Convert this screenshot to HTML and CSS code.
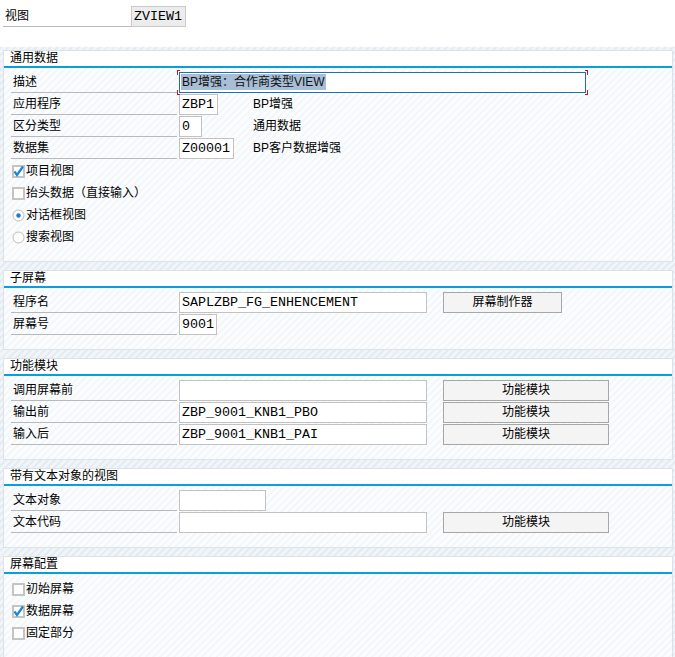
FILE: index.html
```html
<!DOCTYPE html>
<html>

<head>
  <title>视图维护</title>
  <meta charset="utf-8">
  <link rel="stylesheet" href="styles.css">
</head>

<body>

  <div class="top">
    <span class="lbl">视图</span>
    <span class="fld">ZVIEW1</span>
  </div>

  <div class="area">

    <!-- 通用数据 -->
    <div class="grp">
      <div class="grp-head">通用数据</div>
      <div class="grp-body">
        <div class="row">
          <span class="lbl">描述</span>
          <span class="fld fld-sel"><span class="hl">BP增强：合作商类型VIEW</span></span>
        </div>
        <div class="row">
          <span class="lbl">应用程序</span>
          <span class="cell"><span class="fld w39">ZBP1</span></span>
          <span class="txt">BP增强</span>
        </div>
        <div class="row">
          <span class="lbl">区分类型</span>
          <span class="cell"><span class="fld w23">0</span></span>
          <span class="txt">通用数据</span>
        </div>
        <div class="row">
          <span class="lbl">数据集</span>
          <span class="cell"><span class="fld w55">Z00001</span></span>
          <span class="txt">BP客户数据增强</span>
        </div>
        <div class="row opt">
          <svg class="chk" width="13" height="13" viewBox="0 0 13 13"><rect x="1" y="1" width="11" height="11" fill="#fff" stroke="#c4c4c4" stroke-width="2"/><path d="M2.5 6.5 L5 10 L11 1.5" fill="none" stroke="#1e86cf" stroke-width="2.2"/></svg>
          项目视图
        </div>
        <div class="row opt">
          <svg class="chk" width="13" height="13" viewBox="0 0 13 13"><rect x="1" y="1" width="11" height="11" fill="#fff" stroke="#c4c4c4" stroke-width="2"/></svg>
          抬头数据（直接输入）
        </div>
        <div class="row opt">
          <svg class="chk" width="13" height="13" viewBox="0 0 13 13"><circle cx="6.5" cy="6.5" r="5.5" fill="#fff" stroke="#bcbcbc"/><circle cx="6.5" cy="6.5" r="2.2" fill="#1a7cc6"/></svg>
          对话框视图
        </div>
        <div class="row opt">
          <svg class="chk" width="13" height="13" viewBox="0 0 13 13"><circle cx="6.5" cy="6.5" r="5.5" fill="#fff" stroke="#bcbcbc"/></svg>
          搜索视图
        </div>
      </div>
    </div>

    <!-- 子屏幕 -->
    <div class="grp">
      <div class="grp-head">子屏幕</div>
      <div class="grp-body">
        <div class="row">
          <span class="lbl">程序名</span>
          <span class="cell-long"><span class="fld w248">SAPLZBP_FG_ENHENCEMENT</span></span>
          <span class="btn btn-short">屏幕制作器</span>
        </div>
        <div class="row">
          <span class="lbl">屏幕号</span>
          <span class="fld w38">9001</span>
        </div>
      </div>
    </div>

    <!-- 功能模块 -->
    <div class="grp">
      <div class="grp-head">功能模块</div>
      <div class="grp-body">
        <div class="row">
          <span class="lbl">调用屏幕前</span>
          <span class="cell-long"><span class="fld w248"></span></span>
          <span class="btn">功能模块</span>
        </div>
        <div class="row">
          <span class="lbl">输出前</span>
          <span class="cell-long"><span class="fld w248">ZBP_9001_KNB1_PBO</span></span>
          <span class="btn">功能模块</span>
        </div>
        <div class="row">
          <span class="lbl">输入后</span>
          <span class="cell-long"><span class="fld w248">ZBP_9001_KNB1_PAI</span></span>
          <span class="btn">功能模块</span>
        </div>
      </div>
    </div>

    <!-- 带有文本对象的视图 -->
    <div class="grp">
      <div class="grp-head">带有文本对象的视图</div>
      <div class="grp-body">
        <div class="row">
          <span class="lbl">文本对象</span>
          <span class="fld w87"></span>
        </div>
        <div class="row">
          <span class="lbl">文本代码</span>
          <span class="cell-long"><span class="fld w248"></span></span>
          <span class="btn">功能模块</span>
        </div>
      </div>
    </div>

    <!-- 屏幕配置 -->
    <div class="grp grp-last">
      <div class="grp-head">屏幕配置</div>
      <div class="grp-body">
        <div class="row opt">
          <svg class="chk" width="13" height="13" viewBox="0 0 13 13"><rect x="1" y="1" width="11" height="11" fill="#fff" stroke="#c4c4c4" stroke-width="2"/></svg>
          初始屏幕
        </div>
        <div class="row opt">
          <svg class="chk" width="13" height="13" viewBox="0 0 13 13"><rect x="1" y="1" width="11" height="11" fill="#fff" stroke="#c4c4c4" stroke-width="2"/><path d="M2.5 6.5 L5 10 L11 1.5" fill="none" stroke="#1e86cf" stroke-width="2.2"/></svg>
          数据屏幕
        </div>
        <div class="row opt">
          <svg class="chk" width="13" height="13" viewBox="0 0 13 13"><rect x="1" y="1" width="11" height="11" fill="#fff" stroke="#c4c4c4" stroke-width="2"/></svg>
          固定部分
        </div>
      </div>
    </div>

  </div>

</body>

</html>
```

FILE: styles.css
```css
* {
  box-sizing: border-box;
}

body {
  margin: 0;
  background: #fff;
  color: #000;
  font-family: "Liberation Sans", "Noto Sans CJK SC", sans-serif;
  font-size: 12px;
}

/* Hatched area behind the group boxes */
.area {
  padding: 3px 2px 0 3px;
  background: repeating-linear-gradient(135deg, #e3ecf3 0 2px, #f1f5f9 2px 5px);
}

.grp {
  margin-bottom: 8px;
  border: 1px solid #dde2e6;
  background: repeating-linear-gradient(135deg, #f3f7fa 0 2px, #fbfcfd 2px 5px);
}

.grp-last {
  margin-bottom: 0;
}

.grp-head {
  height: 17px;
  line-height: 15px;
  padding-left: 6px;
  background: #fff;
  border-bottom: 2px solid #0a9ddf;
}

.grp-body {
  padding: 4px 0 13px 7px;
}

.grp-last .grp-body {
  padding-bottom: 30px;
}

/* Rows of label + field */
.row {
  display: flex;
  align-items: flex-start;
  height: 22px;
}

.lbl {
  width: 166px;
  height: 21px;
  margin-right: 2px;
  padding-left: 2px;
  line-height: 20px;
  border-bottom: 1px solid #b9b9b9;
  white-space: nowrap;
}

.fld {
  display: block;
  height: 21px;
  padding: 0 2px;
  background: #fff;
  border: 1px solid #c2c2c2;
  font-family: "Liberation Mono", monospace;
  font-size: 13.33px;
  line-height: 19px;
  white-space: nowrap;
  overflow: hidden;
}

.cell {
  width: 74px;
}

.cell-long {
  width: 264px;
}

.txt {
  line-height: 20px;
}

.w23 { width: 23px; }
.w38 { width: 38px; }
.w39 { width: 39px; }
.w55 { width: 55px; }
.w87 { width: 87px; }
.w248 { width: 248px; }

/* Top line: view name */
.top {
  display: flex;
  height: 47px;
  padding: 6px 0 0 3px;
}

.top .lbl {
  width: 128px;
  margin-right: 0;
}

.top .fld {
  width: 55px;
  background: #ececec;
  border-color: #cacaca;
}

/* Focused description field with red corner marks */
.fld-sel {
  position: relative;
  overflow: visible;
  width: 407px;
  border-color: #1b72ad;
  font-family: "Liberation Sans", "Noto Sans CJK SC", sans-serif;
  font-size: 12px;
  padding: 1px 1px;
  line-height: 15px;
}

.hl {
  display: inline-block;
  padding: 0 1px;
  background: #a8bdd6;
  color: #111;
  line-height: 16px;
}

.fld-sel::before,
.fld-sel::after {
  content: "";
  position: absolute;
  top: -3px;
  width: 3px;
  height: 25px;
  background:
    linear-gradient(#d4141c, #d4141c) left top / 3px 1px no-repeat,
    linear-gradient(#d4141c, #d4141c) left top / 1px 5px no-repeat,
    linear-gradient(#d4141c, #d4141c) left bottom / 3px 1px no-repeat,
    linear-gradient(#d4141c, #d4141c) left bottom / 1px 5px no-repeat;
}

.fld-sel::before {
  left: -3px;
}

.fld-sel::after {
  right: -3px;
  transform: scaleX(-1);
}

/* Checkboxes and radio buttons */
.opt {
  align-items: center;
  padding-left: 1px;
  line-height: 20px;
}

.chk {
  display: block;
  margin-right: 1px;
  flex: none;
}

/* Push buttons */
.btn {
  display: block;
  width: 166px;
  height: 21px;
  line-height: 19px;
  text-align: center;
  background: #f4f4f4;
  border: 1px solid #a7a7a7;
}

.btn-short {
  width: 119px;
}
```
